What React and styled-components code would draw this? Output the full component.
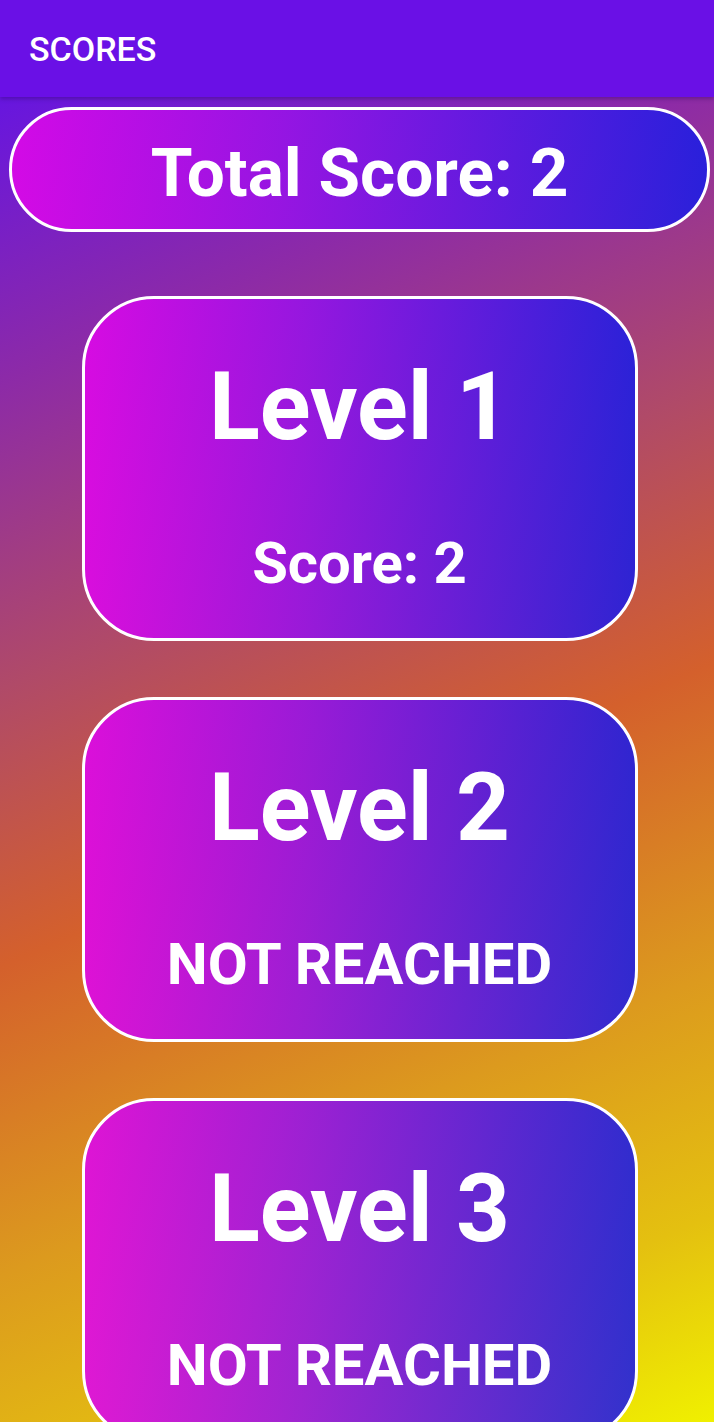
import React from "react";
import styled, { createGlobalStyle } from "styled-components";

const GlobalStyle = createGlobalStyle`
  html, body { margin: 0; padding: 0; }
  body { font-family: Roboto, "Noto Sans", sans-serif; }
  * { box-sizing: border-box; }
`;

const Screen = styled.div`
  height: 100vh;
  overflow: hidden;
  display: flex;
  flex-direction: column;
  background: linear-gradient(157deg, #5a0ff2 0%, #8c2aa8 22%, #b04a68 40%, #d4602c 56%, #dc9a1e 74%, #e4c010 88%, #f0f000 100%);
`;

const TopBar = styled.header`
  flex: none;
  height: 97px;
  display: flex;
  align-items: center;
  padding-left: 29px;
  background: #6a10e6;
  box-shadow: 0 2px 4px rgba(40, 0, 90, 0.35);
  position: relative;
  z-index: 1;
`;

const Title = styled.h1`
  margin: 0;
  font-family: Roboto, sans-serif;
  font-weight: 500;
  font-size: 34px;
  color: #ffffff;
  letter-spacing: 0;
`;

const Content = styled.main`
  display: flex;
  flex-direction: column;
  align-items: center;
  padding: 10px 4px 0 9px;
`;

const cardGradient = `linear-gradient(90deg, rgba(222, 8, 232, 0.9) 0%, rgba(150, 20, 230, 0.9) 40%, rgba(30, 30, 226, 0.9) 100%)`;

const TotalPill = styled.div`
  width: 100%;
  height: 125px;
  border: 3px solid #ffffff;
  border-radius: 63px;
  background: ${cardGradient};
  display: flex;
  align-items: center;
  justify-content: center;
  padding-top: 6px;
`;

const TotalText = styled.span`
  font-family: Roboto, sans-serif;
  font-weight: 700;
  font-size: 67.5px;
  color: #ffffff;
  line-height: 1;
`;

const Cards = styled.div`
  display: flex;
  flex-direction: column;
  gap: 56px;
  margin-top: 64px;
`;

const LevelCard = styled.section`
  width: 556px;
  height: 345px;
  flex: none;
  border: 3px solid #ffffff;
  border-radius: 72px;
  background: ${cardGradient};
  display: flex;
  flex-direction: column;
  align-items: center;
  padding-top: 53px;
`;

const LevelTitle = styled.h2`
  margin: 0;
  font-family: Roboto, sans-serif;
  font-weight: 700;
  font-size: 94px;
  line-height: 110px;
  color: #ffffff;
`;

const LevelStatus = styled.p`
  margin: 68px 0 0;
  font-family: Roboto, sans-serif;
  font-weight: 700;
  font-size: 58px;
  line-height: 67px;
  color: #ffffff;
`;

const levels = [
  { name: "Level 1", status: "Score: 2" },
  { name: "Level 2", status: "NOT REACHED" },
  { name: "Level 3", status: "NOT REACHED" },
];

export default function App() {
  return (
    <>
      <GlobalStyle />
      <Screen>
        <TopBar>
          <Title>SCORES</Title>
        </TopBar>
        <Content>
          <TotalPill>
            <TotalText>Total Score: 2</TotalText>
          </TotalPill>
          <Cards>
            {levels.map((l) => (
              <LevelCard key={l.name}>
                <LevelTitle>{l.name}</LevelTitle>
                <LevelStatus>{l.status}</LevelStatus>
              </LevelCard>
            ))}
          </Cards>
        </Content>
      </Screen>
    </>
  );
}
